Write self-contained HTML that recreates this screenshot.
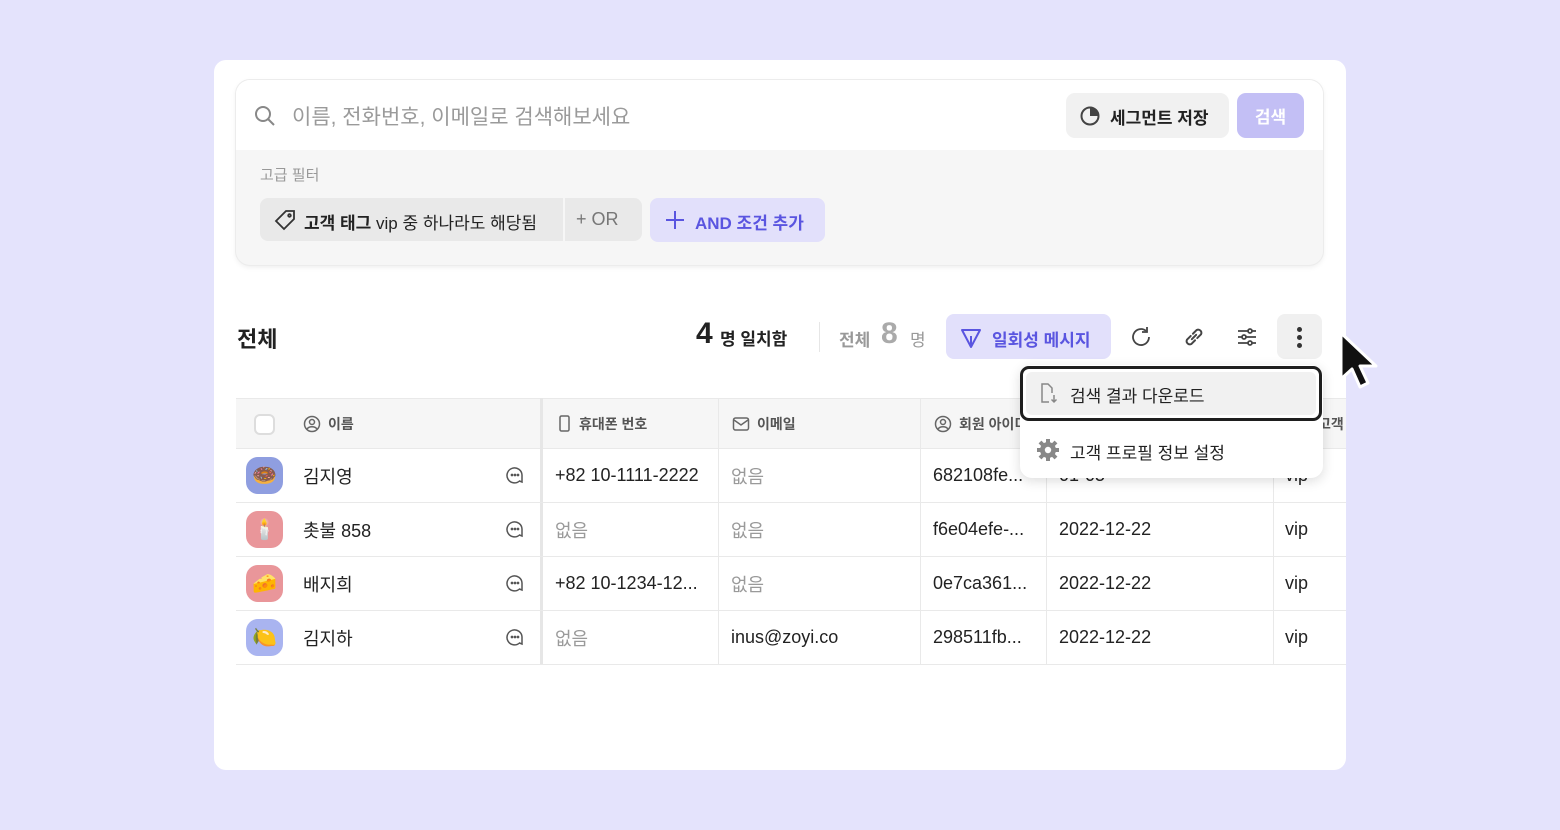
<!DOCTYPE html>
<html><head><meta charset="utf-8"><style>
*{box-sizing:border-box;margin:0;padding:0}
body{width:1560px;height:830px;background:#e4e3fc;font-family:"Liberation Sans","Noto Sans CJK KR",sans-serif;position:relative;overflow:hidden;color:#222}
.card{position:absolute;left:214px;top:60px;width:1132px;height:710px;background:#fff;border-radius:12px;overflow:hidden}
.abs{position:absolute}
.search{left:22px;top:20px;width:1087px;height:185px;border-radius:14px;box-shadow:0 0 0 1px #ececec,0 2px 6px rgba(0,0,0,.08);overflow:hidden;background:#f6f6f6}
.sTop{position:absolute;left:0;top:0;right:0;height:70px;background:#fff}
.t{position:absolute;white-space:nowrap}
.row{position:absolute;left:22px;width:1120px;border-bottom:1px solid #e9e9e9}
.cell{position:absolute;top:0;height:100%;display:flex;align-items:center;font-size:18px;color:#222;white-space:nowrap}
.g{color:#9a9a9a}
.av{position:absolute;left:10px;width:37px;height:37px;border-radius:12px;display:flex;align-items:center;justify-content:center;font-size:20px}
.hd{font-size:14px;font-weight:bold;color:#555;gap:7px}
</style></head><body>
<div class="card">
 <div class="abs search">
  <div class="sTop">
   <svg class="abs" style="left:18px;top:25px" width="22" height="22" viewBox="0 0 22 22" fill="none" stroke="#888" stroke-width="2"><circle cx="9" cy="9" r="7"/><path d="M14 14l6 6"/></svg>
   <div class="t" style="left:56px;top:21px;font-size:21px;color:#9a9a9a">이름, 전화번호, 이메일로 검색해보세요</div>
   <div class="abs" style="left:830px;top:13px;width:163px;height:45px;background:#f1f1f1;border-radius:9px"></div>
   <svg class="abs" style="left:843px;top:25px" width="22" height="22" viewBox="0 0 22 22"><circle cx="11" cy="11" r="8.5" fill="none" stroke="#444" stroke-width="2"/><path d="M11 11V2.5A8.5 8.5 0 0 1 19.5 11z" fill="#444"/></svg>
   <div class="t" style="left:874px;top:24px;font-size:17px;font-weight:bold;color:#222">세그먼트 저장</div>
   <div class="abs" style="left:1001px;top:13px;width:67px;height:45px;background:#c3bff5;border-radius:9px;color:#fff;font-weight:bold;font-size:17px;display:flex;align-items:center;justify-content:center">검색</div>
  </div>
  <div class="t" style="left:24px;top:84px;font-size:15px;color:#999">고급 필터</div>
  <div class="abs" style="left:24px;top:118px;width:382px;height:43px;background:#e9e9e9;border-radius:8px"></div>
  <div class="abs" style="left:327px;top:118px;width:2px;height:43px;background:#f6f6f6"></div>
  <svg class="abs" style="left:38px;top:129px" width="22" height="22" viewBox="0 0 22 22" fill="none" stroke="#333" stroke-width="1.8"><path d="M12 2h8v8L10 20 2 12z"/><circle cx="15.5" cy="6.5" r="1.3"/></svg>
  <div class="t" style="left:68px;top:129px;font-size:17px;color:#222"><b>고객 태그</b> vip 중 하나라도 해당됨</div>
  <div class="t" style="left:340px;top:129px;font-size:18px;color:#777">+ OR</div>
  <div class="abs" style="left:414px;top:118px;width:175px;height:44px;background:#e2e0fb;border-radius:8px"></div>
  <svg class="abs" style="left:428px;top:129px" width="22" height="22" viewBox="0 0 22 22" stroke="#5a55e0" stroke-width="2"><path d="M11 2v18M2 11h18"/></svg>
  <div class="t" style="left:459px;top:129px;font-size:17px;font-weight:bold;color:#5a55e0">AND 조건 추가</div>
 </div>

 <div class="t" style="left:23px;top:262px;font-size:22px;font-weight:bold">전체</div>
 <div class="t" style="left:482px;top:257px;font-size:30px;font-weight:bold">4</div>
 <div class="t" style="left:506px;top:265px;font-size:17px;font-weight:bold">명 일치함</div>
 <div class="abs" style="left:605px;top:262px;width:1px;height:30px;background:#e6e6e6"></div>
 <div class="t" style="left:625px;top:266px;font-size:17px;color:#999;font-weight:bold">전체</div>
 <div class="t" style="left:667px;top:257px;font-size:30px;font-weight:bold;color:#aaa">8</div>
 <div class="t" style="left:696px;top:266px;font-size:17px;color:#999">명</div>
 <div class="abs" style="left:732px;top:254px;width:165px;height:45px;background:#e2e0fb;border-radius:8px"></div>
 <svg class="abs" style="left:746px;top:267px" width="22" height="22" viewBox="0 0 22 22" fill="none" stroke="#5a55e0" stroke-width="2" stroke-linejoin="round"><path d="M2 3h18L11 20zM11 20V9"/></svg>
 <div class="t" style="left:778px;top:266px;font-size:17px;font-weight:bold;color:#5a55e0">일회성 메시지</div>
 <svg class="abs" style="left:915px;top:265px" width="24" height="24" viewBox="0 0 24 24" fill="none" stroke="#444" stroke-width="1.8"><path d="M20 12a8 8 0 1 1-3-6.2"/><path d="M18 2v5h-5"/></svg>
 <svg class="abs" style="left:967px;top:264px" width="26" height="26" viewBox="0 0 24 24" fill="none" stroke="#444" stroke-width="1.8" stroke-linecap="round"><path d="M10 14l4-4"/><path d="M9 11l-3.5 3.5a3 3 0 0 0 4 4L13 15"/><path d="M15 13l3.5-3.5a3 3 0 0 0-4-4L11 9"/></svg>
 <svg class="abs" style="left:1021px;top:265px" width="24" height="24" viewBox="0 0 24 24" fill="none" stroke="#444" stroke-width="1.8"><path d="M3 6h18M3 12h18M3 18h18"/><circle cx="15" cy="6" r="2" fill="#fff"/><circle cx="9" cy="12" r="2" fill="#fff"/><circle cx="15" cy="18" r="2" fill="#fff"/></svg>
 <div class="abs" style="left:1063px;top:254px;width:45px;height:45px;background:#f0f0f0;border-radius:8px"></div>
 <div class="abs" style="left:1083px;top:267px;width:5px;height:5px;border-radius:50%;background:#333;box-shadow:0 8px 0 #333,0 16px 0 #333"></div>

 <div class="row" style="top:338px;height:51px;background:#f6f6f6;border-top:1px solid #e9e9e9">
  <div class="abs" style="left:18px;top:15px;width:21px;height:21px;border:2px solid #ddd;border-radius:6px;background:#fff"></div>
  <div class="cell hd" style="left:67px"><svg width="18" height="18" viewBox="0 0 18 18" fill="none" stroke="#666" stroke-width="1.5"><circle cx="9" cy="9" r="7.5"/><circle cx="9" cy="7" r="2.5"/><path d="M4 14c2-3 8-3 10 0"/></svg>이름</div>
  <div class="cell hd" style="left:322px"><svg width="14" height="18" viewBox="0 0 14 18" fill="none" stroke="#666" stroke-width="1.5"><rect x="2" y="1" width="9" height="15" rx="1.5"/></svg>휴대폰 번호</div>
  <div class="cell hd" style="left:496px"><svg width="18" height="16" viewBox="0 0 18 16" fill="none" stroke="#666" stroke-width="1.5"><rect x="1.5" y="2" width="15" height="12" rx="2"/><path d="M2 4l7 5 7-5"/></svg>이메일</div>
  <div class="cell hd" style="left:698px"><svg width="18" height="18" viewBox="0 0 18 18" fill="none" stroke="#666" stroke-width="1.5"><circle cx="9" cy="9" r="7.5"/><circle cx="9" cy="7" r="2.5"/><path d="M4 14c2-3 8-3 10 0"/></svg>회원 아이디</div>
  <div class="cell hd" style="left:1082px">고객 태그</div>
 </div>
 <div class="abs" style="left:326px;top:338px;width:3px;height:266px;background:#e6e6e6"></div>
 <div class="abs" style="left:504px;top:338px;width:1px;height:266px;background:#e9e9e9"></div>
 <div class="abs" style="left:706px;top:338px;width:1px;height:266px;background:#e9e9e9"></div>
 <div class="abs" style="left:832px;top:338px;width:1px;height:266px;background:#e9e9e9"></div>
 <div class="abs" style="left:1059px;top:338px;width:1px;height:266px;background:#e9e9e9"></div>

 <div class="row" style="top:389px;height:54px">
  <div class="av" style="top:8px;background:#8f9ee0">🍩</div>
  <div class="cell" style="left:67px">김지영</div>
  <div class="cell" style="left:319px">+82 10-1111-2222</div>
  <div class="cell g" style="left:495px">없음</div>
  <div class="cell" style="left:697px">682108fe...</div>
  <div class="cell" style="left:823px">01-05</div>
  <div class="cell" style="left:1049px">vip</div>
 </div>
 <div class="row" style="top:443px;height:54px">
  <div class="av" style="top:8px;background:#e9969a">🕯️</div>
  <div class="cell" style="left:67px">촛불 858</div>
  <div class="cell g" style="left:319px">없음</div>
  <div class="cell g" style="left:495px">없음</div>
  <div class="cell" style="left:697px">f6e04efe-...</div>
  <div class="cell" style="left:823px">2022-12-22</div>
  <div class="cell" style="left:1049px">vip</div>
 </div>
 <div class="row" style="top:497px;height:54px">
  <div class="av" style="top:8px;background:#e9969a">🧀</div>
  <div class="cell" style="left:67px">배지희</div>
  <div class="cell" style="left:319px">+82 10-1234-12...</div>
  <div class="cell g" style="left:495px">없음</div>
  <div class="cell" style="left:697px">0e7ca361...</div>
  <div class="cell" style="left:823px">2022-12-22</div>
  <div class="cell" style="left:1049px">vip</div>
 </div>
 <div class="row" style="top:551px;height:54px">
  <div class="av" style="top:8px;background:#a9b4f0">🍋</div>
  <div class="cell" style="left:67px">김지하</div>
  <div class="cell g" style="left:319px">없음</div>
  <div class="cell" style="left:495px">inus@zoyi.co</div>
  <div class="cell" style="left:697px">298511fb...</div>
  <div class="cell" style="left:823px">2022-12-22</div>
  <div class="cell" style="left:1049px">vip</div>
 </div>
 <svg class="abs" style="left:292px;top:406px" width="18" height="18" viewBox="0 0 18 18" fill="none" stroke="#555" stroke-width="1.5"><path d="M16 16l-2.5-1A7.5 7.5 0 1 1 16 9z"/><circle cx="6" cy="9" r=".6" fill="#555"/><circle cx="9" cy="9" r=".6" fill="#555"/><circle cx="12" cy="9" r=".6" fill="#555"/></svg>
 <svg class="abs" style="left:292px;top:460px" width="18" height="18" viewBox="0 0 18 18" fill="none" stroke="#555" stroke-width="1.5"><path d="M16 16l-2.5-1A7.5 7.5 0 1 1 16 9z"/><circle cx="6" cy="9" r=".6" fill="#555"/><circle cx="9" cy="9" r=".6" fill="#555"/><circle cx="12" cy="9" r=".6" fill="#555"/></svg>
 <svg class="abs" style="left:292px;top:514px" width="18" height="18" viewBox="0 0 18 18" fill="none" stroke="#555" stroke-width="1.5"><path d="M16 16l-2.5-1A7.5 7.5 0 1 1 16 9z"/><circle cx="6" cy="9" r=".6" fill="#555"/><circle cx="9" cy="9" r=".6" fill="#555"/><circle cx="12" cy="9" r=".6" fill="#555"/></svg>
 <svg class="abs" style="left:292px;top:568px" width="18" height="18" viewBox="0 0 18 18" fill="none" stroke="#555" stroke-width="1.5"><path d="M16 16l-2.5-1A7.5 7.5 0 1 1 16 9z"/><circle cx="6" cy="9" r=".6" fill="#555"/><circle cx="9" cy="9" r=".6" fill="#555"/><circle cx="12" cy="9" r=".6" fill="#555"/></svg>

 <div class="abs" style="left:806px;top:305px;width:303px;height:113px;background:#fff;border-radius:12px;box-shadow:0 3px 12px rgba(0,0,0,.14)"></div>
 <div class="abs" style="left:806px;top:306px;width:302px;height:55px;border:3px solid #1e1e1e;border-radius:9px;background:#fff"></div>
 <div class="abs" style="left:812px;top:312px;width:290px;height:43px;background:#f1f1f1;border-radius:6px"></div>
 <svg class="abs" style="left:824px;top:322px" width="20" height="22" viewBox="0 0 20 22" fill="none" stroke="#888" stroke-width="1.5"><path d="M11 20H4V2h6l4 4v5"/><path d="M16 13v7M13.5 17.5L16 20l2.5-2.5"/></svg>
 <div class="t" style="left:856px;top:322px;font-size:17px;color:#222">검색 결과 다운로드</div>
 <svg class="abs" style="left:822px;top:378px" width="24" height="24" viewBox="0 0 24 24"><g stroke="#888" stroke-width="4"><path d="M12 1v22M1 12h22M4 4l16 16M20 4L4 20"/></g><circle cx="12" cy="12" r="8" fill="#888"/><circle cx="12" cy="12" r="3.2" fill="#fff"/></svg>
 <div class="t" style="left:856px;top:379px;font-size:17px;color:#222">고객 프로필 정보 설정</div>
</div>
<svg class="abs" style="left:1336px;top:330px" width="46" height="62" viewBox="0 0 46 62"><path d="M5 3v46l11-10 8 18 8-4-8-17h16z" fill="#111" stroke="#fff" stroke-width="3" stroke-linejoin="round"/></svg>
</body></html>
